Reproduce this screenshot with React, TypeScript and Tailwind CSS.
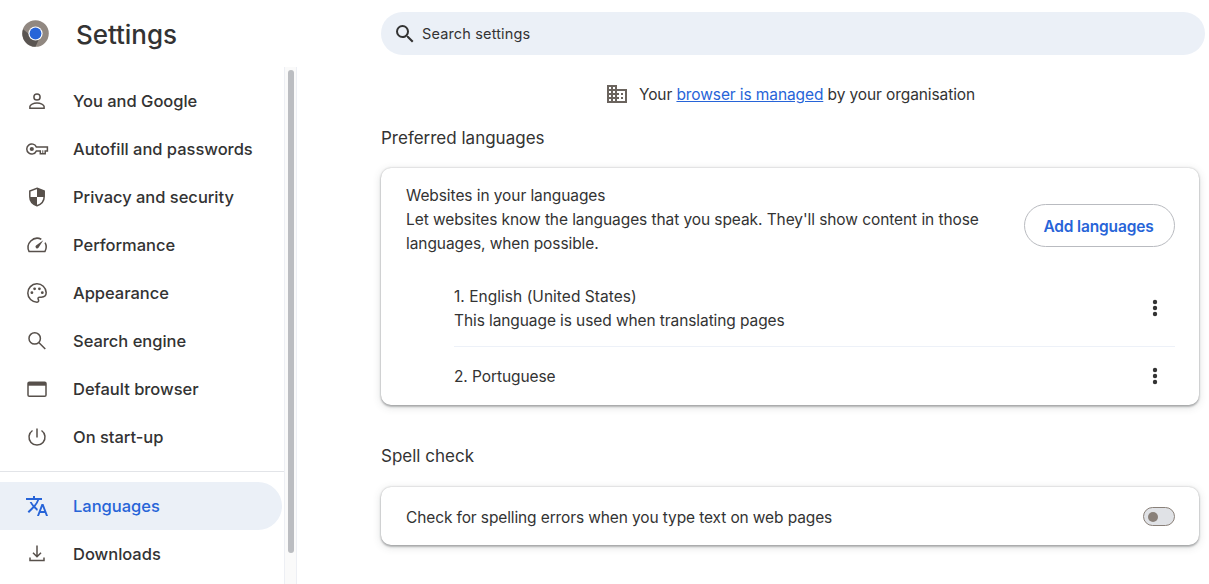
import type { ReactNode } from "react";
import { MdTranslate, MdSearch, MdBusiness } from "react-icons/md";

function Icon({ children }: { children: ReactNode }) {
  return (
    <svg
      viewBox="0 0 24 24"
      className="size-6 shrink-0"
      fill="none"
      stroke="currentColor"
      strokeWidth="1.5"
    >
      {children}
    </svg>
  );
}

const items: { label: string; icon: ReactNode }[] = [
  {
    label: "You and Google",
    icon: (
      <Icon>
        <circle cx="12" cy="8" r="3.1" />
        <path d="M4.9 19.3v-1.7c0-2.1 3.6-3.5 7.1-3.5s7.1 1.4 7.1 3.5v1.7z" />
      </Icon>
    ),
  },
  {
    label: "Autofill and passwords",
    icon: (
      <Icon>
        <path d="M11.3 9.9A5 5 0 1 0 11.3 14.1H15.3V16.7H20.2V14.1H22.4V9.9z" strokeWidth="1.5" />
        <circle cx="6.8" cy="12" r="2.1" fill="currentColor" stroke="none" />
        <path d="M17.8 13.3v3" strokeWidth="1" />
      </Icon>
    ),
  },
  {
    label: "Privacy and security",
    icon: (
      <Icon>
        <path d="M12 3.3l7.2 2.8v5.4c0 4.3-2.9 7.8-7.2 9.2-4.3-1.4-7.2-4.9-7.2-9.2V6.1z" />
        <path d="M12 3.3l7.2 2.8V12H12zM12 12v8.7c-3.9-1.3-6.7-4.5-7.2-8.7z" fill="currentColor" stroke="none" />
      </Icon>
    ),
  },
  {
    label: "Performance",
    icon: (
      <Icon>
        <path d="M16.3 6.2A9.2 9.2 0 0 0 4.1 18.6h15.8a9.2 9.2 0 0 0 .2-8.9" strokeLinejoin="round" />
        <path d="M18.3 7.3l-4.8 7.5a1.7 1.7 0 1 1-2.5-2.3z" fill="currentColor" stroke="none" />
      </Icon>
    ),
  },
  {
    label: "Appearance",
    icon: (
      <Icon>
        <path d="M12 21.2a9.2 9.2 0 1 1 9.2-9.6c0 3-2.2 4.6-4.9 4.6h-1.7c-1.4 0-2 1.3-1.3 2.3.7 1 .4 2.7-1.3 2.7z" />
        <g fill="currentColor" stroke="none">
          <circle cx="6.9" cy="11.7" r="1.4" />
          <circle cx="9.6" cy="7.8" r="1.4" />
          <circle cx="14.4" cy="7.8" r="1.4" />
          <circle cx="17.3" cy="11.7" r="1.4" />
        </g>
      </Icon>
    ),
  },
  {
    label: "Search engine",
    icon: (
      <Icon>
        <circle cx="9.7" cy="9.4" r="5.7" />
        <path d="M13.8 13.5l6.5 6.5" />
      </Icon>
    ),
  },
  {
    label: "Default browser",
    icon: (
      <Icon>
        <rect x="3" y="5.2" width="18" height="14" rx="1.3" />
        <path d="M3 5.2h18v3.5H3z" fill="currentColor" stroke="none" />
      </Icon>
    ),
  },
  {
    label: "On start-up",
    icon: (
      <Icon>
        <path d="M12 3.5v9M7.5 5.5a8 8 0 1 0 9 0" />
      </Icon>
    ),
  },
];

function NavItem({ icon, label, active = false }: { icon: ReactNode; label: string; active?: boolean }) {
  return (
    <a
      className={`flex h-12 w-[282px] shrink-0 items-center gap-6 rounded-r-full pl-[25px] ${
        active ? "bg-[#ebf0f7] text-[#2764d8]" : "text-[#57504b]"
      }`}
    >
      {icon}
      <span className={`pt-px text-[16.5px] font-medium whitespace-nowrap tracking-[-0.02px] ${active ? "" : "text-[#333333]"}`}>
        {label}
      </span>
    </a>
  );
}

function Dots() {
  return (
    <svg viewBox="0 0 6 18" className="h-[18px] w-1.5 shrink-0" fill="#333333">
      <circle cx="3" cy="3" r="2.2" />
      <circle cx="3" cy="9" r="2.2" />
      <circle cx="3" cy="15" r="2.2" />
    </svg>
  );
}

function Logo() {
  return (
    <svg viewBox="0 0 28 28" className="size-7">
      <circle cx="13.5" cy="13.5" r="13.3" fill="#918881" />
      <path d="M8 15L1.1 9.2A13.3 13.3 0 0 0 13.5 26.8L17 19z" fill="#5a5552" />
      <circle cx="13.5" cy="13.5" r="7.1" fill="#fff" />
      <circle cx="13.5" cy="13.5" r="5.9" fill="#2764d8" />
    </svg>
  );
}

const card =
  "rounded-[10px] bg-white shadow-[0_0_2px_rgba(60,64,67,0.35),0_2px_2px_rgba(60,64,67,0.3),0_2px_8px_rgba(60,64,67,0.18)]";

export default function App() {
  return (
    <div className="flex h-[584px] w-[1209px] overflow-hidden bg-white font-['Inter',sans-serif] text-[#333333]">
      <aside className="flex w-[297px] shrink-0 flex-col">
        <header className="flex h-[67px] shrink-0 items-center gap-[26px] pl-[22px]">
          <Logo />
          <h1 className="pt-px text-[26px] font-medium tracking-[-0.05px]">Settings</h1>
        </header>
        <div className="flex h-[517px]">
          <nav className="flex w-[284px] shrink-0 flex-col overflow-hidden pt-2.5">
            {items.map((item) => (
              <NavItem key={item.label} {...item} />
            ))}
            <div className="my-[10px] h-px shrink-0 bg-[#e2e4e8]" />
            <NavItem active icon={<MdTranslate className="size-6 shrink-0" />} label="Languages" />
            <NavItem
              icon={
                <Icon>
                  <path d="M12 3.5v11M8 10.7l4 4 4-4M5 15.5V18.5h14v-3" />
                </Icon>
              }
              label="Downloads"
            />
          </nav>
          <div className="w-[13px] border-x border-[#edeff4] bg-[#fafafa] pt-[3px] pl-[3px]">
            <div className="h-[483px] w-1.5 rounded-full bg-[#bbbdc1]" />
          </div>
        </div>
      </aside>

      <main className="ml-[84px] w-[824px] pt-3">
        <div className="flex h-[43px] items-center gap-[5px] rounded-full bg-[#ebf0f7] pl-3">
          <MdSearch className="size-6" />
          <span className="text-[14.5px] tracking-[0.15px]">Search settings</span>
        </div>

        <div className="mt-[27px] flex h-6 w-[818px] items-center justify-center gap-[10px]">
          <MdBusiness className="size-6 text-[#6b645e]" />
          <p className="pt-0.5 text-[15.5px] tracking-[-0.1px] whitespace-nowrap">
            Your <a className="text-[#2764d8] underline">browser is managed</a> by your organisation
          </p>
        </div>

        <h2 className="mt-5 text-[17px] leading-6">Preferred languages</h2>

        <section className={`mt-[18px] h-[237px] w-[818px] pt-4 pr-6 pl-[25px] ${card}`}>
          <div className="flex items-center justify-between">
            <p className="text-[15.5px] leading-6 tracking-[-0.08px] whitespace-nowrap">
              Websites in your languages
              <br />
              Let websites know the languages that you speak. They'll show content in those
              <br />
              languages, when possible.
            </p>
            <button className="mt-[11px] h-[43px] w-[151px] rounded-full border border-[#b9bbc0] pt-[3px] pr-2 pl-1.5 text-[15.5px] font-semibold tracking-[-0.15px] whitespace-nowrap text-[#2764d8]">
              Add languages
            </button>
          </div>
          <div className="mt-[17px] ml-12 flex h-[74px] justify-between border-b border-[#edf1f8] pr-[17px]">
            <p className="pt-3 text-[15.5px] leading-6 tracking-[-0.09px]">
              <span className="tracking-[0.03px]">1. English (United States)</span>
              <br />
              This language is used when translating pages
            </p>
            <div className="pt-[26px]">
              <Dots />
            </div>
          </div>
          <div className="ml-12 flex h-[58px] items-center justify-between pr-[17px] text-[15.5px]">
            <p className="pt-0.5 tracking-[-0.09px]">2. Portuguese</p>
            <Dots />
          </div>
        </section>

        <h2 className="mt-[39px] text-[17px] leading-6">Spell check</h2>

        <section className={`mt-[19px] flex h-[58px] w-[818px] items-center justify-between pr-6 pl-[25px] ${card}`}>
          <p className="pt-[3px] text-[15.5px] tracking-[-0.12px]">Check for spelling errors when you type text on web pages</p>
          <div className="mt-px flex h-[19px] w-8 items-center rounded-full border border-[#898079] bg-[#e0e2e6] pl-1">
            <div className="size-2.5 rounded-full bg-[#898079]" />
          </div>
        </section>
      </main>
    </div>
  );
}
